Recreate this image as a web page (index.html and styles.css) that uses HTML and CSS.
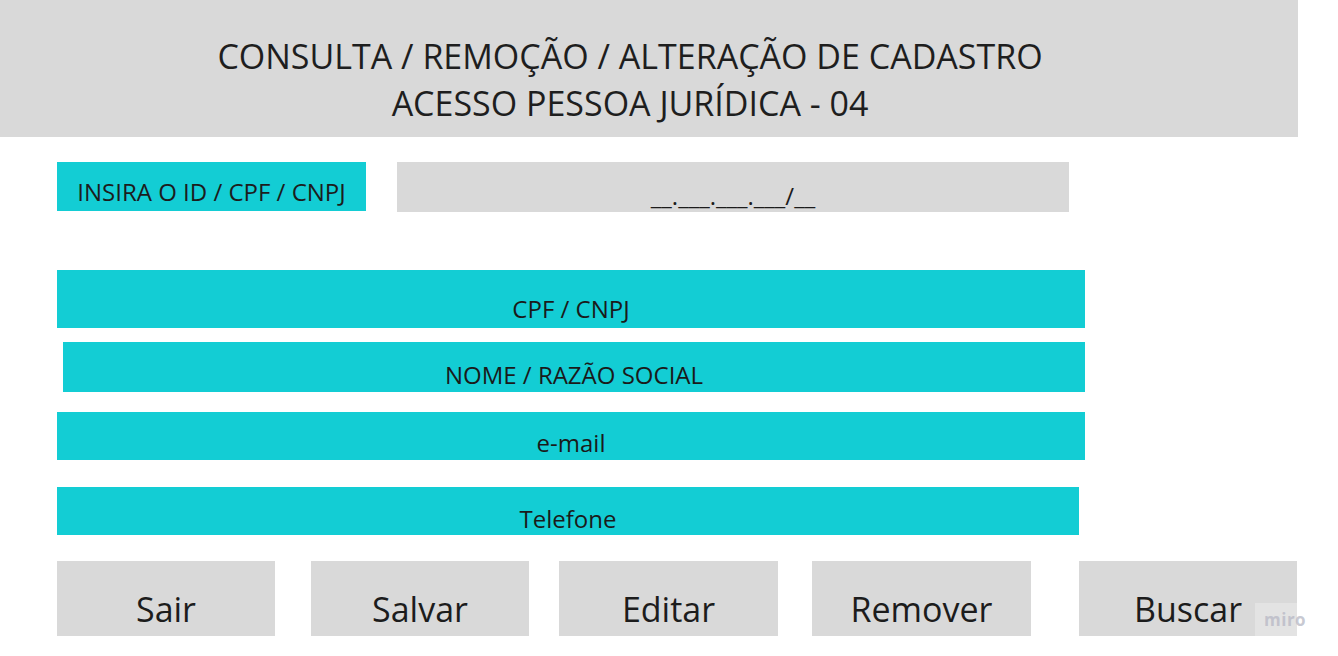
FILE: index.html
```html
<!DOCTYPE html>
<html lang="pt-BR">
<head>
<meta charset="utf-8">
<title>Consulta / Remoção / Alteração de Cadastro</title>
<link rel="stylesheet" href="styles.css">
</head>
<body>
<div class="page">
  <header class="header">
    <div class="title-line">CONSULTA / REMOÇÃO / ALTERAÇÃO DE CADASTRO</div>
    <div class="title-line">ACESSO PESSOA JURÍDICA - 04</div>
  </header>
  <main class="content">
    <div class="search-row">
      <div class="search-label">INSIRA O ID / CPF / CNPJ</div>
      <div class="search-input">__.___.___.___/__</div>
    </div>
    <div class="field field-cpf">CPF / CNPJ</div>
    <div class="field field-nome">NOME / RAZÃO SOCIAL</div>
    <div class="field field-email">e-mail</div>
    <div class="field field-tel">Telefone</div>
    <div class="actions">
      <div class="btn btn-sair">Sair</div>
      <div class="btn btn-salvar">Salvar</div>
      <div class="btn btn-editar">Editar</div>
      <div class="btn btn-remover">Remover</div>
      <div class="btn btn-buscar">Buscar</div>
    </div>
  </main>
  <div class="miro">miro</div>
</div>
</body>
</html>
```
FILE: styles.css
```css
html, body {
  margin: 0;
  padding: 0;
  background: #ffffff;
}
body {
  font-family: "Open Sans", "Noto Sans", sans-serif;
  color: #1c1c1c;
}
.page {
  position: relative;
  width: 1338px;
  height: 656px;
  overflow: hidden;
}
.header {
  width: 1298px;
  height: 137px;
  box-sizing: border-box;
  background: #d9d9d9;
  padding-top: 33px;
  padding-right: 38px;
  text-align: center;
  font-size: 34px;
  line-height: 47px;
  color: #1e1e1e;
}
.content {
  padding-left: 57px;
}
.search-row {
  display: flex;
  align-items: flex-start;
  margin-top: 25px;
  height: 50px;
}
.search-label {
  width: 309px;
  height: 49px;
  box-sizing: border-box;
  background: #13cdd4;
  display: flex;
  align-items: flex-end;
  justify-content: center;
  padding-bottom: 7px;
  font-size: 24px;
  line-height: 24px;
}
.search-input {
  margin-left: 31px;
  width: 672px;
  height: 50px;
  box-sizing: border-box;
  background: #d9d9d9;
  display: flex;
  align-items: flex-end;
  justify-content: center;
  padding-bottom: 4px;
  font-size: 24px;
  line-height: 24px;
}
.field {
  background: #13cdd4;
  box-sizing: border-box;
  display: flex;
  align-items: flex-end;
  justify-content: center;
  font-size: 24px;
  line-height: 24px;
  color: #1a1a1a;
}
.field-cpf {
  margin-top: 58px;
  width: 1028px;
  height: 58px;
  padding-bottom: 7px;
}
.field-nome {
  margin-top: 14px;
  margin-left: 6px;
  width: 1022px;
  height: 50px;
  padding-bottom: 5px;
}
.field-email {
  margin-top: 20px;
  width: 1028px;
  height: 48px;
  padding-bottom: 5px;
}
.field-tel {
  margin-top: 27px;
  width: 1022px;
  height: 48px;
  padding-bottom: 4px;
}
.actions {
  display: flex;
  margin-top: 26px;
}
.btn {
  width: 218px;
  height: 75px;
  box-sizing: border-box;
  background: #d9d9d9;
  display: flex;
  align-items: flex-end;
  justify-content: center;
  padding-bottom: 10px;
  font-size: 34px;
  line-height: 34px;
  color: #1c1c1c;
}
.btn-salvar { margin-left: 36px; }
.btn-editar { margin-left: 30px; width: 219px; }
.btn-remover { margin-left: 34px; width: 219px; }
.btn-buscar { margin-left: 48px; }
.miro {
  position: absolute;
  left: 1255px;
  top: 603px;
  width: 60px;
  height: 34px;
  box-sizing: border-box;
  padding-left: 9px;
  background: rgba(255, 255, 255, 0.28);
  font-family: "Open Sans", sans-serif;
  font-weight: 700;
  font-size: 17px;
  line-height: 34px;
  letter-spacing: 0.5px;
  color: rgba(185, 186, 198, 0.8);
}
```
